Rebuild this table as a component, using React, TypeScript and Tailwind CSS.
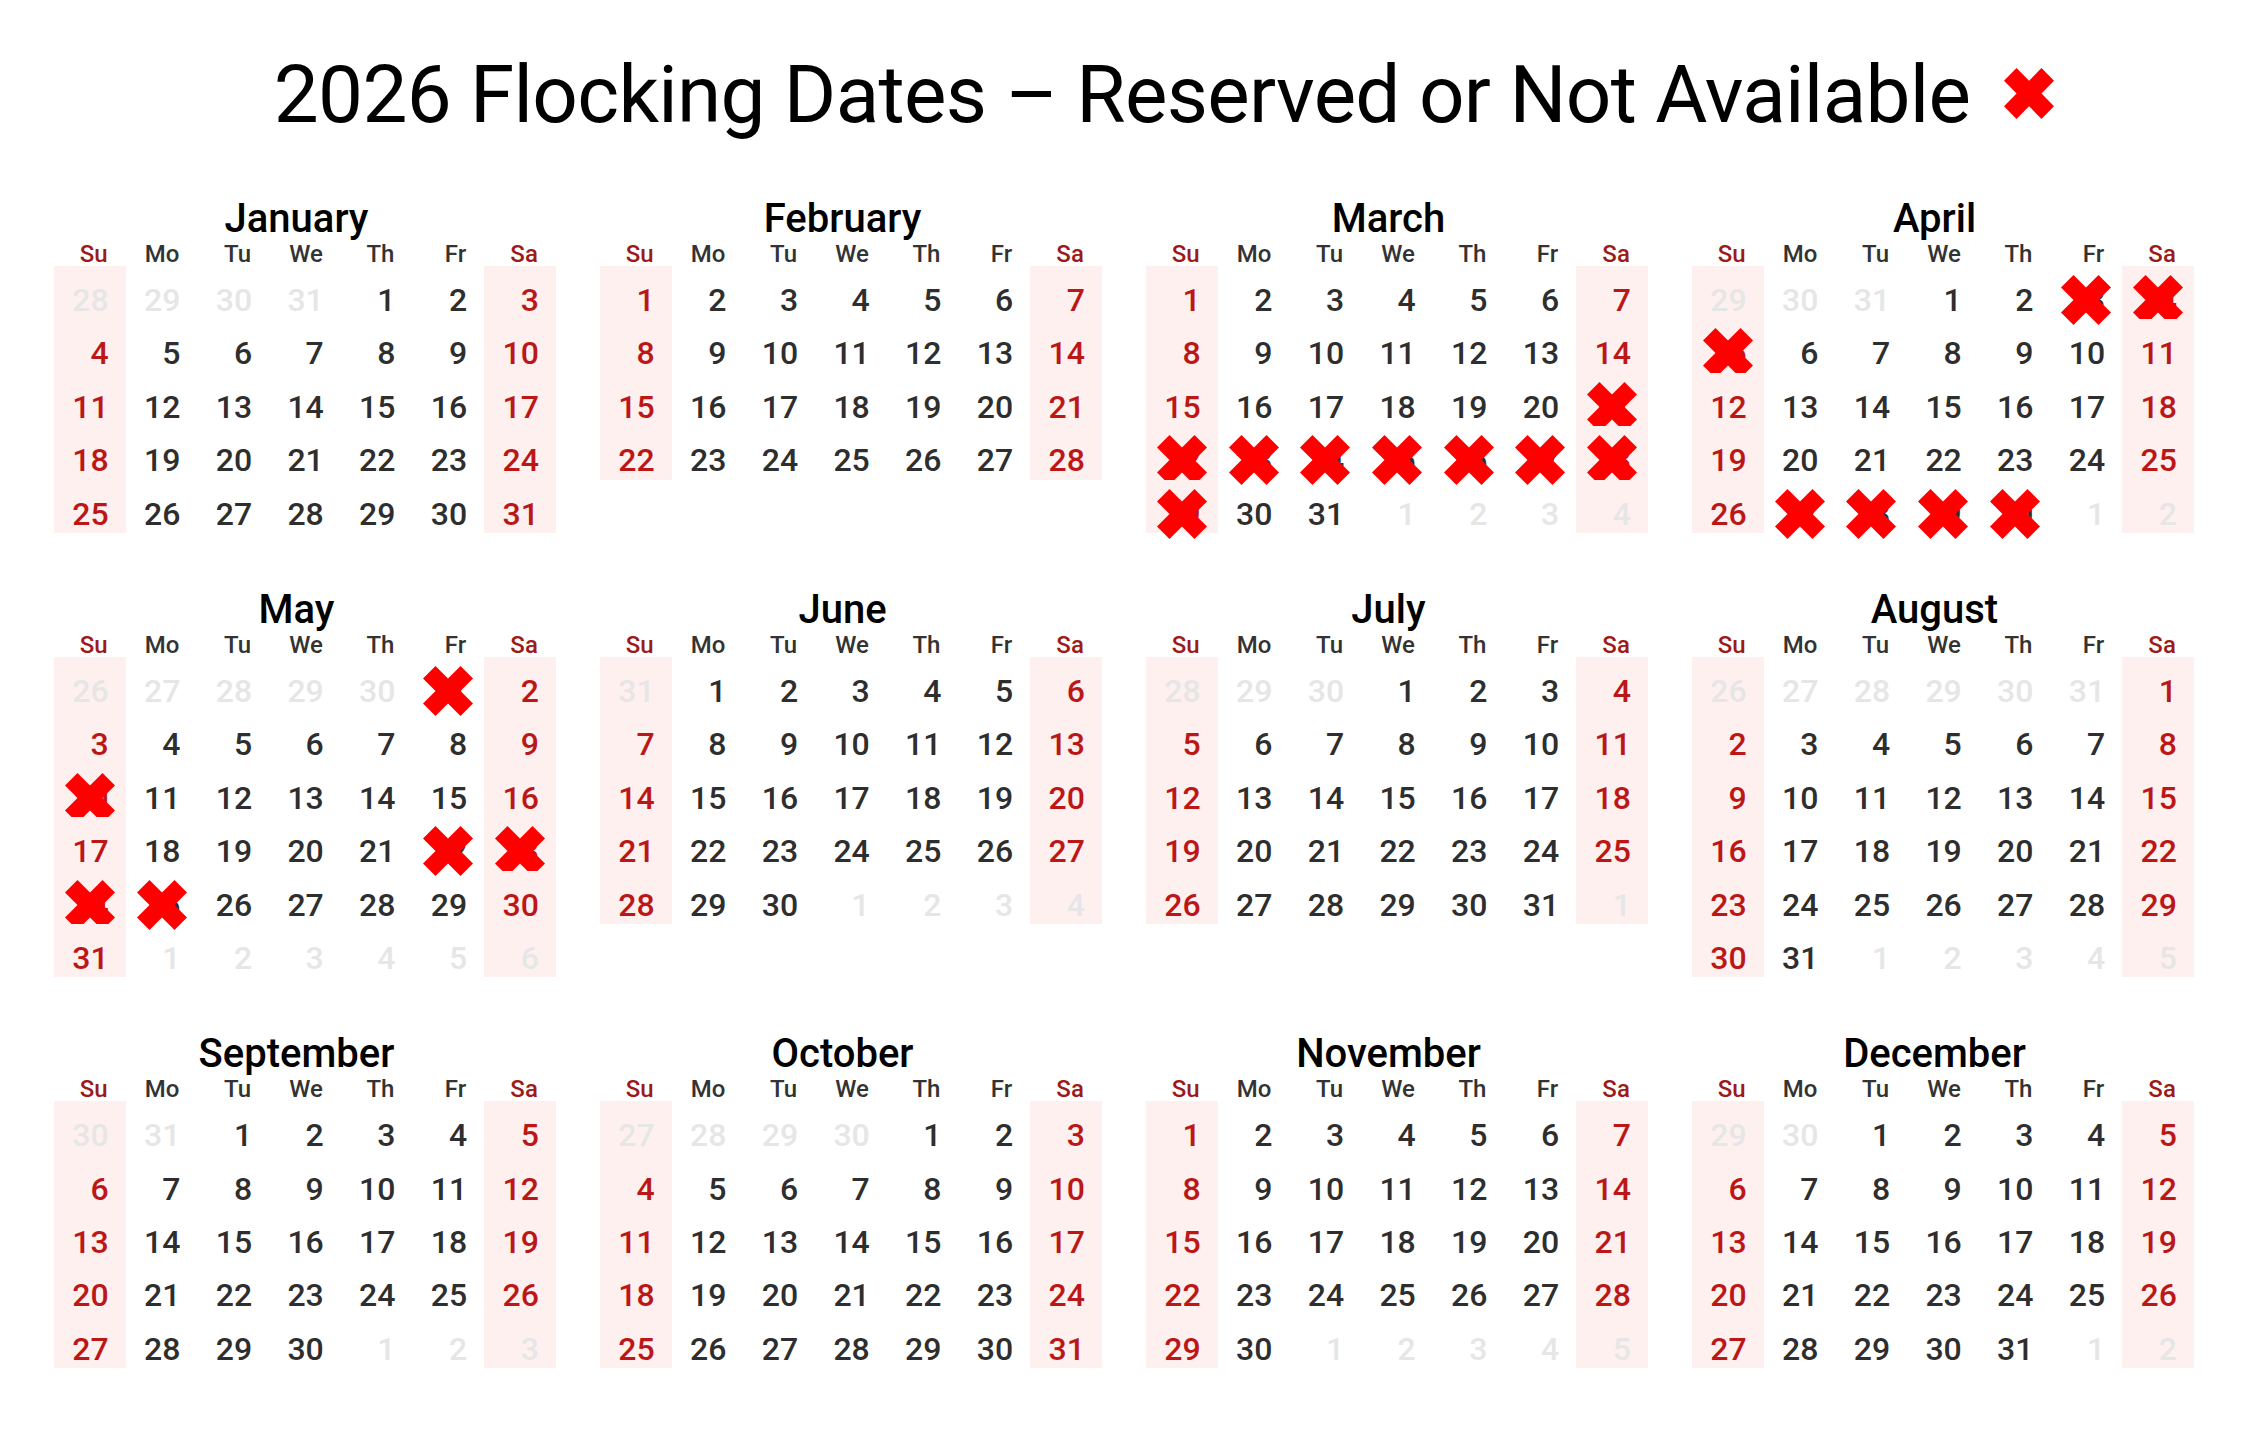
const MONTHS = [
  "January", "February", "March", "April", "May", "June",
  "July", "August", "September", "October", "November", "December",
]
const DAYS = ["Su", "Mo", "Tu", "We", "Th", "Fr", "Sa"]

// month index (0-based) -> blocked days
const BLOCKED: Record<number, number[]> = {
  2: [21, 22, 23, 24, 25, 26, 27, 28, 29],
  3: [3, 4, 5, 27, 28, 29, 30],
  4: [1, 10, 22, 23, 24, 25],
}

type Cell = { day: number; inMonth: boolean }

function buildCells(year: number, month: number): Cell[] {
  const first = new Date(year, month, 1).getDay()
  const days = new Date(year, month + 1, 0).getDate()
  const prevDays = new Date(year, month, 0).getDate()
  const cells: Cell[] = []
  for (let i = 0; i < first; i++) cells.push({ day: prevDays - first + 1 + i, inMonth: false })
  for (let d = 1; d <= days; d++) cells.push({ day: d, inMonth: true })
  let next = 1
  while (cells.length % 7 !== 0) cells.push({ day: next++, inMonth: false })
  return cells
}

function Cross({ className }: { className: string }) {
  return (
    <svg viewBox="0 0 100 100" preserveAspectRatio="none" className={className}>
      <rect x="-3" y="32.3" width="106" height="35.4" fill="#ff0000" transform="rotate(45 50 50)" />
      <rect x="-3" y="32.3" width="106" height="35.4" fill="#ff0000" transform="rotate(-45 50 50)" />
    </svg>
  )
}

function Month({ month }: { month: number }) {
  const cells = buildCells(2026, month)
  const blocked = BLOCKED[month] ?? []
  return (
    <div className="w-[502px]">
      <div className="h-[43px] pr-[17px] text-center text-[40px] leading-[38px] font-medium text-black">
        {MONTHS[month]}
      </div>
      <div className="grid grid-cols-[repeat(7,71.7px)] h-[23px] text-[24px] leading-[23px] font-medium">
        {DAYS.map((d, i) => (
          <div
            key={d}
            className={`text-right pr-[18px] ${i === 0 || i === 6 ? "text-[#9e1a1a]" : "text-[#333333]"}`}
          >
            {d}
          </div>
        ))}
      </div>
      <div className="grid grid-cols-[repeat(7,71.7px)]">
        {cells.map((c, i) => {
          const col = i % 7
          const weekend = col === 0 || col === 6
          const isBlocked = c.inMonth && blocked.includes(c.day)
          return (
            <div
              key={i}
              className={`relative h-[53.4px] pt-[18px] pr-[17px] text-right text-[32px] leading-[32px] font-medium ${
                weekend ? "bg-[#fff0f0]" : ""
              } ${!c.inMonth ? "text-[#e6e6e6]" : weekend ? "text-[#bb1717]" : "text-[#2e2e2e]"}`}
            >
              {c.day}
              {isBlocked && <Cross className="absolute left-[11px] top-[9px] w-[50px] h-[50px]" />}
            </div>
          )
        })}
      </div>
    </div>
  )
}

export default function App() {
  return (
    <div className="w-[2244px] min-h-[1439px] bg-white" style={{ fontFamily: "Roboto, 'Liberation Sans', sans-serif" }}>
      <div className="pt-[55px] flex justify-center">
        <h1 className="relative h-[80px] text-[80px] leading-[80px] tracking-[-0.7px] font-normal text-black whitespace-nowrap">
          2026 Flocking Dates – Reserved or Not Available
          <Cross className="absolute left-full ml-[34px] top-[13px] w-[50px] h-[51px]" />
        </h1>
      </div>
      <div className="mt-[65px] pl-[54px] grid grid-cols-[repeat(4,502px)] gap-x-[44px] gap-y-[58px] items-start">
        {MONTHS.map((_, m) => (
          <Month key={m} month={m} />
        ))}
      </div>
    </div>
  )
}
